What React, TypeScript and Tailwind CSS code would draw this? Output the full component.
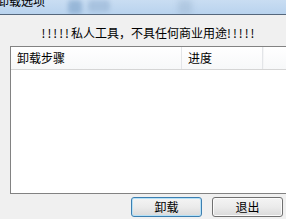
const cjk = { fontFamily: '"Noto Sans CJK SC", "Liberation Sans", sans-serif' };

function TitleBar() {
  return (
    <div className="relative h-[15px] overflow-hidden border-b border-[#55677c] bg-gradient-to-b from-[#c9ddf2] to-[#b9d3ee]">
      <div className="absolute left-[68px] top-0 h-[14px] w-[14px] rounded-sm bg-[#7da2c9] opacity-60 blur-[2px]" />
      <div className="absolute left-[88px] top-0 h-[12px] w-[22px] rounded-sm bg-[#9db9d8] opacity-70 blur-[2px]" />
      <div className="absolute left-[178px] top-0 h-[15px] w-[14px] bg-[#a3bcd6] opacity-60 blur-[3px]" />
      <div
        className="absolute -left-[3px] -top-[9px] text-[12px] leading-[20px] text-black"
        style={cjk}
      >
        卸载选项
      </div>
    </div>
  );
}

function Btn({ label, primary }: { label: string; primary?: boolean }) {
  return (
    <button
      type="button"
      className={`h-[20px] w-[71px] rounded-[3px] border bg-gradient-to-b from-[#f4f4f4] via-[#ebebeb] to-[#dadada] text-[12px] leading-[18px] text-black ${
        primary
          ? "border-[#3c7fb1] shadow-[inset_0_0_0_1px_#b6e1f7]"
          : "border-[#707070] shadow-[inset_0_0_0_1px_#fbfbfb]"
      }`}
      style={cjk}
    >
      {label}
    </button>
  );
}

export default function App() {
  return (
    <div className="h-[219px] w-[286px] overflow-hidden bg-[#f0f0f0]" style={cjk}>
      <TitleBar />
      <div className="mt-[10px] flex justify-center pl-[12px] text-[12px] leading-[16px] text-black">
        <span className="tracking-[2px]">!!!!!</span>
        <span>私人工具，不具任何商业用途</span>
        <span className="tracking-[2px]">!!!!!</span>
      </div>
      <div className="ml-[10px] mt-[5px] h-[148px] w-[290px] border border-[#828282] bg-white">
        <div className="flex h-[23px] border-b border-[#d5d5d5] bg-gradient-to-b from-white to-[#f7f8f9] text-[12px] leading-[22px] text-black">
          <div className="w-[171px] border-r border-[#e3e5e8] pl-[6px]">卸载步骤</div>
          <div className="w-[81px] border-r border-[#e3e5e8] pl-[6px]">进度</div>
          <div className="flex-1 border-l border-[#f4f5f6]" />
        </div>
      </div>
      <div className="mt-[3px] flex justify-end gap-[10px] pr-[3px]">
        <Btn label="卸载" primary />
        <Btn label="退出" />
      </div>
    </div>
  );
}
